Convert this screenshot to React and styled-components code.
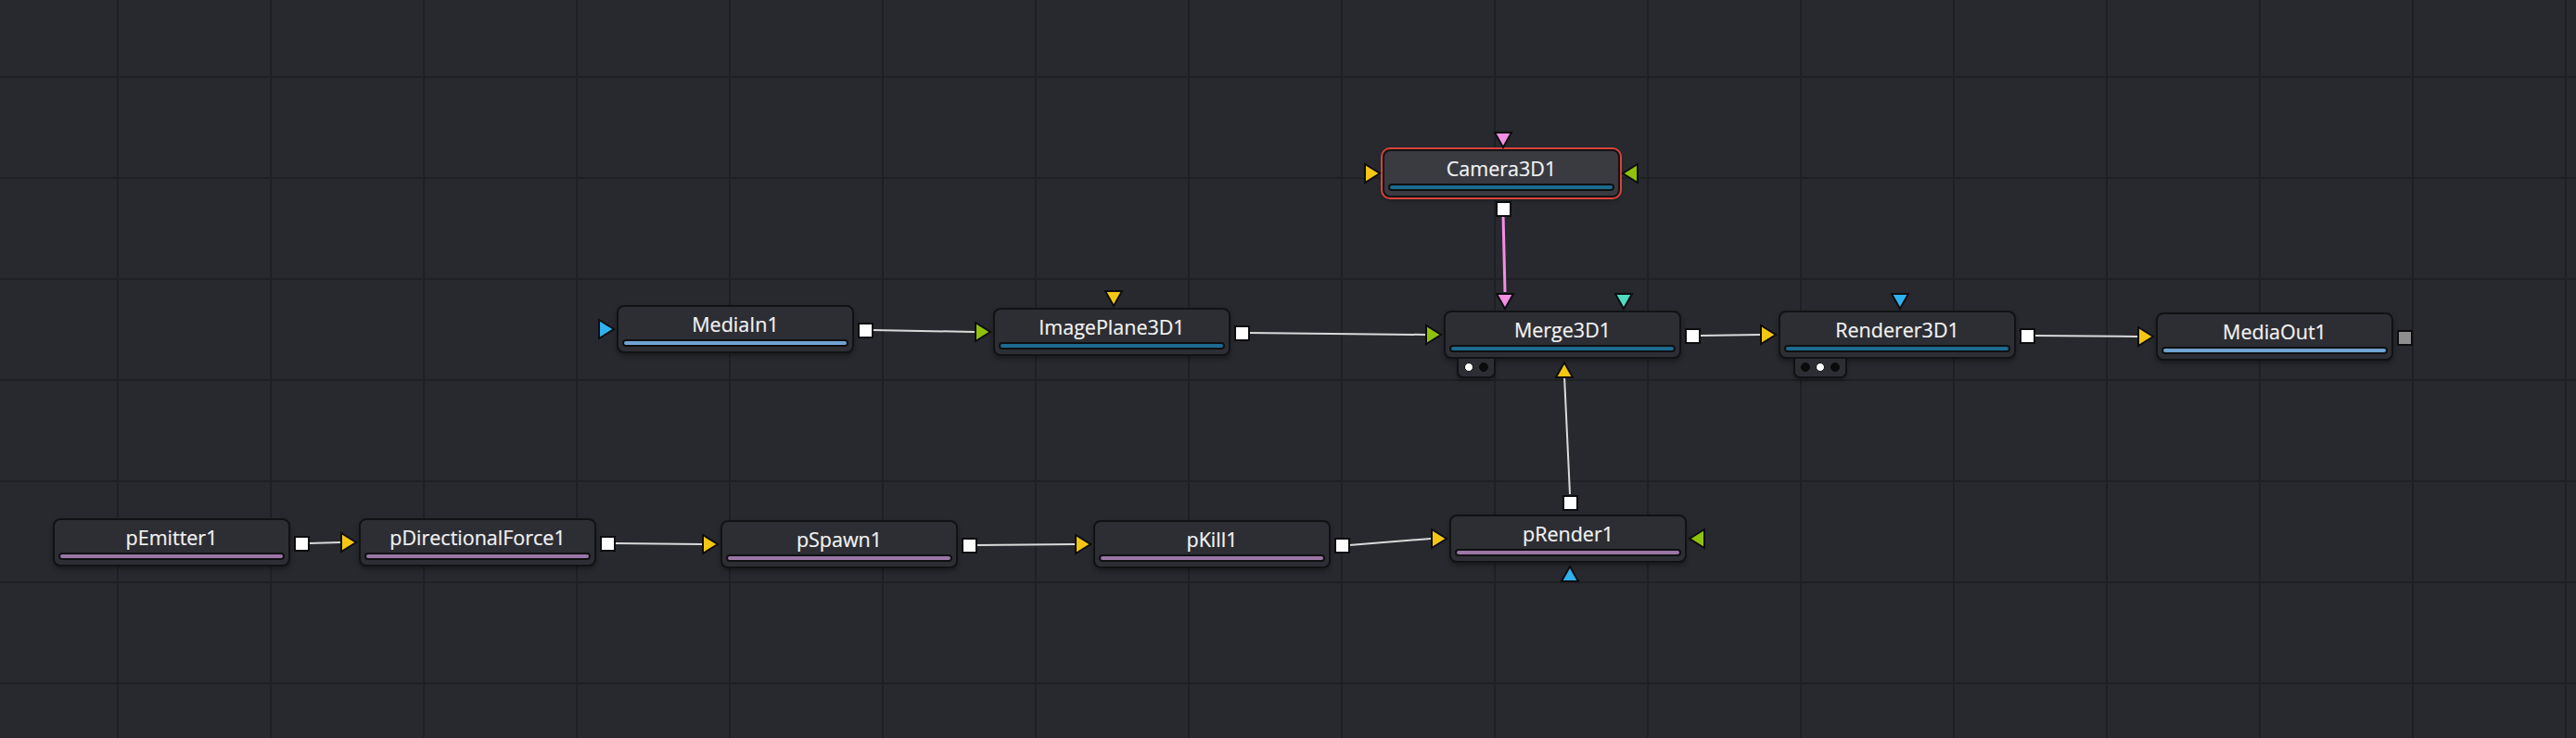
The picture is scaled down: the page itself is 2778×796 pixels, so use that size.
import React from "react";
import styled, { createGlobalStyle, css } from "styled-components";

const GlobalStyle = createGlobalStyle`
  html, body {
    margin: 0;
    padding: 0;
    background: #28292e;
  }
  body {
    font-family: "Open Sans", "Noto Sans", sans-serif;
  }
`;

const NODE_W = 256;
const NODE_H = 52;

const BARS = {
  io: "#70a3d2",
  three: "#1d6a8f",
  particle: "#9b76a6",
};

const TRI = {
  yellow: "#f3c614",
  green: "#8fc20b",
  blue: "#2fb1f0",
  pink: "#f48ee4",
  teal: "#4fdcc0",
};

const nodes = [
  { id: "mediain", label: "MediaIn1", x: 665, y: 329, bar: "io", left: "blue" },
  { id: "imageplane", label: "ImagePlane3D1", x: 1071, y: 332, bar: "three", left: "green", top: [{ at: 130, color: "yellow" }] },
  {
    id: "merge", label: "Merge3D1", x: 1557, y: 335, bar: "three", left: "green",
    top: [{ at: 66, color: "pink" }, { at: 194, color: "teal" }],
    bottom: "yellow", dots: [true, false], dotsAt: 12,
  },
  {
    id: "renderer", label: "Renderer3D1", x: 1918, y: 335, bar: "three", left: "yellow",
    top: [{ at: 131, color: "blue" }], dots: [false, true, false], dotsAt: 14,
  },
  { id: "mediaout", label: "MediaOut1", x: 2325, y: 337, bar: "io", left: "yellow", grayOut: true },
  {
    id: "camera", label: "Camera3D1", x: 1491, y: 161, bar: "three", left: "yellow", right: "green",
    top: [{ at: 130, color: "pink" }], selected: true, out: "below",
  },
  { id: "emitter", label: "pEmitter1", x: 57, y: 559, bar: "particle" },
  { id: "dirforce", label: "pDirectionalForce1", x: 387, y: 559, bar: "particle", left: "yellow" },
  { id: "spawn", label: "pSpawn1", x: 777, y: 561, bar: "particle", left: "yellow" },
  { id: "kill", label: "pKill1", x: 1179, y: 561, bar: "particle", left: "yellow" },
  {
    id: "render", label: "pRender1", x: 1563, y: 555, bar: "particle", left: "yellow", right: "green",
    bottom: "blue", out: "above",
  },
];

const byId = Object.fromEntries(nodes.map((n) => [n.id, n]));

// output / input anchor points in canvas coords
const outPt = (n) => [n.x + NODE_W + 20, n.y + 27];
const inPt = (n) => [n.x - 20, n.y + 26];

const links = [
  ["mediain", "imageplane"],
  ["imageplane", "merge"],
  ["merge", "renderer"],
  ["renderer", "mediaout"],
  ["emitter", "dirforce"],
  ["dirforce", "spawn"],
  ["spawn", "kill"],
  ["kill", "render"],
];

const Canvas = styled.div`
  position: relative;
  width: 2778px;
  height: 796px;
  overflow: hidden;
  background-color: #28292e;
  background-image:
    linear-gradient(to right, #1f2024 2px, transparent 2px),
    linear-gradient(to bottom, #1f2024 2px, transparent 2px);
  background-size: 165px 109px;
  background-position: 126px 82px;
`;

const Wires = styled.svg`
  position: absolute;
  inset: 0;
  width: 100%;
  height: 100%;
`;

const NodeBox = styled.div`
  position: absolute;
  left: ${(p) => p.$x}px;
  top: ${(p) => p.$y}px;
  box-sizing: border-box;
  width: ${NODE_W}px;
  height: ${NODE_H}px;
  display: flex;
  flex-direction: column;
  padding: 0 4px 5px;
  background: ${(p) => (p.$selected ? "#3a3b41" : "#2d2e34")};
  border: 2px solid #111214;
  border-radius: 8px;
  box-shadow: 0 3px 5px rgba(0, 0, 0, 0.35);
  ${(p) =>
    p.$selected &&
    css`
      box-shadow: 0 0 0 2px #d9443a, 0 3px 5px rgba(0, 0, 0, 0.35);
    `}
`;

const Label = styled.div`
  flex: 1;
  display: flex;
  align-items: center;
  justify-content: center;
  padding-top: 1px;
  color: #f2f2f2;
  font-size: 21.5px;
  white-space: nowrap;
  -webkit-text-stroke: 0.2px #f2f2f2;
`;

const Bar = styled.div`
  height: 4px;
  border: 2px solid #0f1012;
  border-radius: 5px;
  background: ${(p) => p.$color};
`;

const OutSquare = styled.div`
  position: absolute;
  box-sizing: border-box;
  width: 17px;
  height: 17px;
  border: 2px solid #0d0d0f;
  background: ${(p) => (p.$gray ? "#8e8e8e" : "#ffffff")};
  ${(p) =>
    p.$where === "right" &&
    css`
      left: ${NODE_W + 2}px;
      top: 17px;
    `}
  ${(p) =>
    p.$where === "below" &&
    css`
      left: 120px;
      top: ${NODE_H + 2}px;
    `}
  ${(p) =>
    p.$where === "above" &&
    css`
      left: 120px;
      top: -23px;
    `}
`;

// where each kind of port triangle sits around its node
const portPlace = {
  left: css`
    width: 20px;
    height: 24px;
    left: -23px;
    top: 12px;
  `,
  right: css`
    width: 20px;
    height: 24px;
    left: ${NODE_W - 1}px;
    top: 12px;
  `,
  top: css`
    width: 22px;
    height: 20px;
    left: ${(p) => p.$at - 13}px;
    top: -22px;
  `,
  bottom: css`
    width: 22px;
    height: 20px;
    left: 117px;
    top: ${NODE_H}px;
  `,
};

const Port = styled.svg`
  position: absolute;
  overflow: visible;
  ${(p) => portPlace[p.$side]}
`;

const DotTab = styled.div`
  position: absolute;
  top: ${NODE_H - 2}px;
  left: ${(p) => p.$at}px;
  display: flex;
  gap: 6px;
  padding: 4px 6px 5px;
  background: #2d2e34;
  border: 2px solid #111214;
  border-top: none;
  border-radius: 0 0 7px 7px;
  box-shadow: 0 3px 4px rgba(0, 0, 0, 0.3);
`;

const Dot = styled.span`
  width: 10px;
  height: 10px;
  border-radius: 50%;
  background: ${(p) => (p.$on ? "#ffffff" : "#0b0b0c")};
  border: 1px solid #0b0b0c;
  box-sizing: border-box;
`;

const TRI_SHAPE = {
  left: { box: "0 0 20 24", pts: "2,2 18,12 2,22" },
  right: { box: "0 0 20 24", pts: "18,2 2,12 18,22" },
  top: { box: "0 0 22 20", pts: "2,2 20,2 11,18" },
  bottom: { box: "0 0 22 20", pts: "2,18 20,18 11,2" },
};

function Tri({ side, color, at }) {
  const shape = TRI_SHAPE[side];
  return (
    <Port $side={side} $at={at} viewBox={shape.box}>
      <polygon points={shape.pts} fill={TRI[color]} stroke="#0d0d0f" strokeWidth="2" />
    </Port>
  );
}

function Node({ n }) {
  return (
    <NodeBox $x={n.x} $y={n.y} $selected={n.selected}>
      <Label>{n.label}</Label>
      <Bar $color={BARS[n.bar]} />
      {n.left && <Tri side="left" color={n.left} />}
      {n.right && <Tri side="right" color={n.right} />}
      {(n.top || []).map((t) => (
        <Tri key={t.at} side="top" color={t.color} at={t.at} />
      ))}
      {n.bottom && <Tri side="bottom" color={n.bottom} />}
      {n.dots && (
        <DotTab $at={n.dotsAt}>
          {n.dots.map((on, i) => (
            <Dot key={i} $on={on} />
          ))}
        </DotTab>
      )}
      <OutSquare $where={n.out || "right"} $gray={n.grayOut} />
    </NodeBox>
  );
}

export default function App() {
  const cam = byId.camera;
  const merge = byId.merge;
  const prender = byId.render;
  return (
    <>
      <GlobalStyle />
      <Canvas>
        <Wires>
          {links.map(([a, b]) => {
            const [x1, y1] = outPt(byId[a]);
            const [x2, y2] = inPt(byId[b]);
            return <line key={a + b} x1={x1} y1={y1} x2={x2} y2={y2} stroke="#dadada" strokeWidth="2" />;
          })}
          <line
            x1={cam.x + 130}
            y1={cam.y + NODE_H + 18}
            x2={merge.x + 66}
            y2={merge.y - 20}
            stroke="#f48ee4"
            strokeWidth="3"
          />
          <line
            x1={prender.x + 130}
            y1={prender.y - 22}
            x2={merge.x + 130}
            y2={merge.y + NODE_H + 18}
            stroke="#dadada"
            strokeWidth="2"
          />
        </Wires>
        {nodes.map((n) => (
          <Node key={n.id} n={n} />
        ))}
      </Canvas>
    </>
  );
}
